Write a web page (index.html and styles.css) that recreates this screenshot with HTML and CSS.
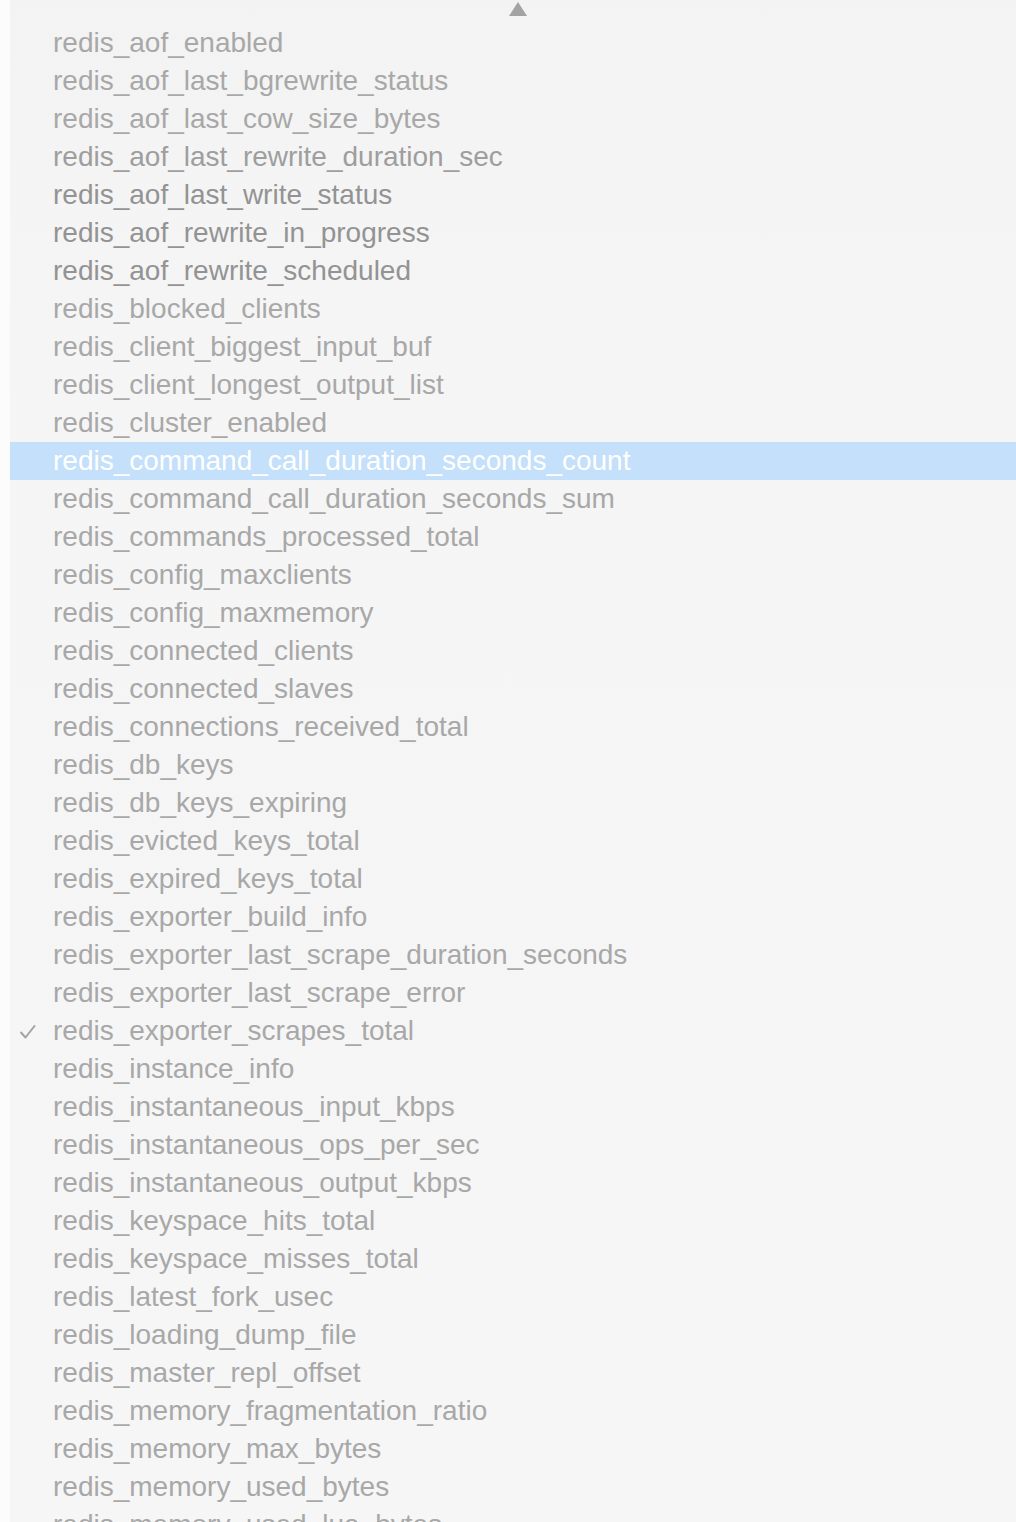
FILE: index.html
```html
<!DOCTYPE html>
<html>
<head>
<meta charset="utf-8">
<link rel="stylesheet" href="styles.css">
</head>
<body>
<div class="menu">
  <div class="scroll-arrow"><span class="tri"></span></div>
  <ul class="items">
    <li class="item">redis_aof_enabled</li>
    <li class="item">redis_aof_last_bgrewrite_status</li>
    <li class="item">redis_aof_last_cow_size_bytes</li>
    <li class="item mid">redis_aof_last_rewrite_duration_sec</li>
    <li class="item dark">redis_aof_last_write_status</li>
    <li class="item dark">redis_aof_rewrite_in_progress</li>
    <li class="item dark">redis_aof_rewrite_scheduled</li>
    <li class="item">redis_blocked_clients</li>
    <li class="item">redis_client_biggest_input_buf</li>
    <li class="item">redis_client_longest_output_list</li>
    <li class="item">redis_cluster_enabled</li>
    <li class="item selected">redis_command_call_duration_seconds_count</li>
    <li class="item">redis_command_call_duration_seconds_sum</li>
    <li class="item">redis_commands_processed_total</li>
    <li class="item">redis_config_maxclients</li>
    <li class="item">redis_config_maxmemory</li>
    <li class="item">redis_connected_clients</li>
    <li class="item">redis_connected_slaves</li>
    <li class="item">redis_connections_received_total</li>
    <li class="item">redis_db_keys</li>
    <li class="item">redis_db_keys_expiring</li>
    <li class="item">redis_evicted_keys_total</li>
    <li class="item">redis_expired_keys_total</li>
    <li class="item">redis_exporter_build_info</li>
    <li class="item">redis_exporter_last_scrape_duration_seconds</li>
    <li class="item">redis_exporter_last_scrape_error</li>
    <li class="item checked"><svg class="check" width="18" height="16" viewBox="0 0 18 16"><polyline points="2,8.5 6.5,13.5 15.5,2" fill="none" stroke="#a3a3a3" stroke-width="2" stroke-linecap="round" stroke-linejoin="round"/></svg>redis_exporter_scrapes_total</li>
    <li class="item">redis_instance_info</li>
    <li class="item">redis_instantaneous_input_kbps</li>
    <li class="item">redis_instantaneous_ops_per_sec</li>
    <li class="item">redis_instantaneous_output_kbps</li>
    <li class="item">redis_keyspace_hits_total</li>
    <li class="item">redis_keyspace_misses_total</li>
    <li class="item">redis_latest_fork_usec</li>
    <li class="item">redis_loading_dump_file</li>
    <li class="item">redis_master_repl_offset</li>
    <li class="item">redis_memory_fragmentation_ratio</li>
    <li class="item">redis_memory_max_bytes</li>
    <li class="item">redis_memory_used_bytes</li>
    <li class="item">redis_memory_used_lua_bytes</li>
  </ul>
</div>
</body>
</html>
```

FILE: styles.css
```css
html, body {
  margin: 0;
  padding: 0;
  height: 1522px;
  overflow: hidden;
  background: #fcfcfc;
}

.menu {
  margin-left: 10px;
  height: 1522px;
  background: linear-gradient(#f3f3f3 0px, #f5f5f5 300px, #f6f6f6 100%);
  font-family: "Liberation Sans", Arial, sans-serif;
  font-size: 28px;
  color: #a8a8a8;
  overflow: hidden;
}

.scroll-arrow {
  height: 24px;
  display: flex;
  justify-content: center;
  padding-left: 10px;
}

.tri {
  margin-top: 2px;
  width: 0;
  height: 0;
  border-left: 9px solid transparent;
  border-right: 9px solid transparent;
  border-bottom: 14px solid #a3a3a3;
}

.items {
  list-style: none;
  margin: 0;
  padding: 0;
}

.item {
  position: relative;
  height: 38px;
  line-height: 38px;
  padding-left: 43px;
  white-space: nowrap;
}

.item.mid { color: #9e9e9e; }
.item.dark { color: #939393; }

.item.selected {
  background: #c4e0fa;
  color: #ffffff;
}

.check {
  position: absolute;
  left: 9px;
  top: 12px;
}
```
